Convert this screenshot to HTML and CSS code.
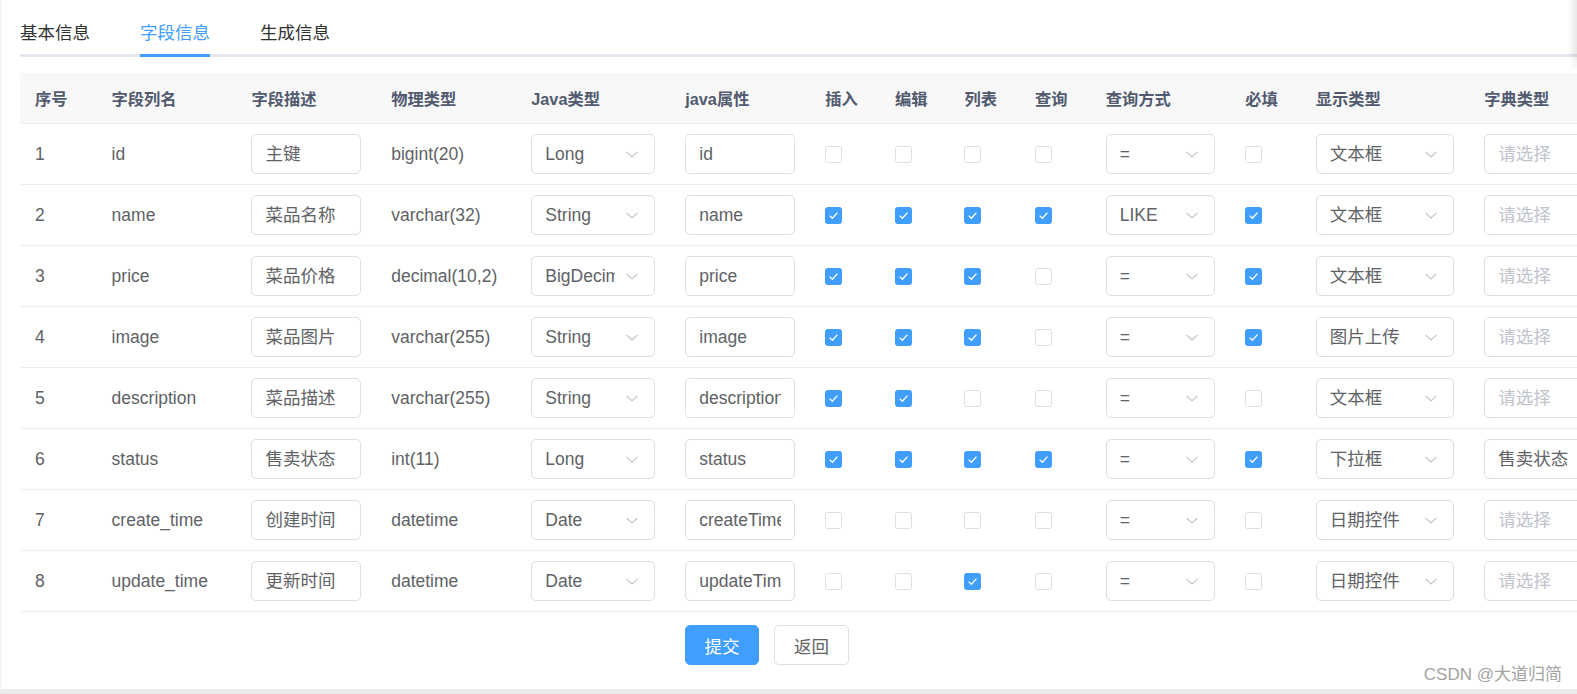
FILE: index.html
```html
<!DOCTYPE html>
<html lang="zh-CN">
<head>
<meta charset="utf-8">
<title>字段信息</title>
<link rel="stylesheet" href="styles.css">
</head>
<body>
<div class="page">
  <div class="edge-shadow"></div>
  <div class="tabs">
    <div class="tab">基本信息</div>
    <div class="tab active">字段信息</div>
    <div class="tab">生成信息</div>
  </div>

  <div class="table">
    <div class="row head">
      <div class="cell">序号</div><div class="cell">字段列名</div><div class="cell">字段描述</div><div class="cell">物理类型</div><div class="cell">Java类型</div><div class="cell">java属性</div><div class="cell">插入</div><div class="cell">编辑</div><div class="cell">列表</div><div class="cell">查询</div><div class="cell">查询方式</div><div class="cell">必填</div><div class="cell">显示类型</div><div class="cell">字典类型</div>
    </div>

    <!-- row 1 -->
    <div class="row body">
      <div class="cell">1</div><div class="cell">id</div>
      <div class="cell"><div class="ctl"><span class="v">主键</span></div></div>
      <div class="cell">bigint(20)</div>
      <div class="cell"><div class="ctl sel"><span class="v">Long</span><svg class="arr" viewBox="0 0 12 7"><path d="M0.5 0.8L6 6L11.5 0.8"/></svg></div></div>
      <div class="cell"><div class="ctl"><span class="v">id</span></div></div>
      <div class="cell"><span class="cb"></span></div>
      <div class="cell"><span class="cb"></span></div>
      <div class="cell"><span class="cb"></span></div>
      <div class="cell"><span class="cb"></span></div>
      <div class="cell"><div class="ctl sel"><span class="v">=</span><svg class="arr" viewBox="0 0 12 7"><path d="M0.5 0.8L6 6L11.5 0.8"/></svg></div></div>
      <div class="cell"><span class="cb"></span></div>
      <div class="cell"><div class="ctl sel"><span class="v">文本框</span><svg class="arr" viewBox="0 0 12 7"><path d="M0.5 0.8L6 6L11.5 0.8"/></svg></div></div>
      <div class="cell"><div class="ctl sel"><span class="v ph">请选择</span><svg class="arr" viewBox="0 0 12 7"><path d="M0.5 0.8L6 6L11.5 0.8"/></svg></div></div>
    </div>

    <!-- row 2 -->
    <div class="row body">
      <div class="cell">2</div><div class="cell">name</div>
      <div class="cell"><div class="ctl"><span class="v">菜品名称</span></div></div>
      <div class="cell">varchar(32)</div>
      <div class="cell"><div class="ctl sel"><span class="v">String</span><svg class="arr" viewBox="0 0 12 7"><path d="M0.5 0.8L6 6L11.5 0.8"/></svg></div></div>
      <div class="cell"><div class="ctl"><span class="v">name</span></div></div>
      <div class="cell"><span class="cb on"><svg viewBox="0 0 17 17"><path d="M4.6 8.6L7.4 11.3L12.4 5.6"/></svg></span></div>
      <div class="cell"><span class="cb on"><svg viewBox="0 0 17 17"><path d="M4.6 8.6L7.4 11.3L12.4 5.6"/></svg></span></div>
      <div class="cell"><span class="cb on"><svg viewBox="0 0 17 17"><path d="M4.6 8.6L7.4 11.3L12.4 5.6"/></svg></span></div>
      <div class="cell"><span class="cb on"><svg viewBox="0 0 17 17"><path d="M4.6 8.6L7.4 11.3L12.4 5.6"/></svg></span></div>
      <div class="cell"><div class="ctl sel"><span class="v">LIKE</span><svg class="arr" viewBox="0 0 12 7"><path d="M0.5 0.8L6 6L11.5 0.8"/></svg></div></div>
      <div class="cell"><span class="cb on"><svg viewBox="0 0 17 17"><path d="M4.6 8.6L7.4 11.3L12.4 5.6"/></svg></span></div>
      <div class="cell"><div class="ctl sel"><span class="v">文本框</span><svg class="arr" viewBox="0 0 12 7"><path d="M0.5 0.8L6 6L11.5 0.8"/></svg></div></div>
      <div class="cell"><div class="ctl sel"><span class="v ph">请选择</span><svg class="arr" viewBox="0 0 12 7"><path d="M0.5 0.8L6 6L11.5 0.8"/></svg></div></div>
    </div>

    <!-- row 3 -->
    <div class="row body">
      <div class="cell">3</div><div class="cell">price</div>
      <div class="cell"><div class="ctl"><span class="v">菜品价格</span></div></div>
      <div class="cell">decimal(10,2)</div>
      <div class="cell"><div class="ctl sel"><span class="v">BigDecimal</span><svg class="arr" viewBox="0 0 12 7"><path d="M0.5 0.8L6 6L11.5 0.8"/></svg></div></div>
      <div class="cell"><div class="ctl"><span class="v">price</span></div></div>
      <div class="cell"><span class="cb on"><svg viewBox="0 0 17 17"><path d="M4.6 8.6L7.4 11.3L12.4 5.6"/></svg></span></div>
      <div class="cell"><span class="cb on"><svg viewBox="0 0 17 17"><path d="M4.6 8.6L7.4 11.3L12.4 5.6"/></svg></span></div>
      <div class="cell"><span class="cb on"><svg viewBox="0 0 17 17"><path d="M4.6 8.6L7.4 11.3L12.4 5.6"/></svg></span></div>
      <div class="cell"><span class="cb"></span></div>
      <div class="cell"><div class="ctl sel"><span class="v">=</span><svg class="arr" viewBox="0 0 12 7"><path d="M0.5 0.8L6 6L11.5 0.8"/></svg></div></div>
      <div class="cell"><span class="cb on"><svg viewBox="0 0 17 17"><path d="M4.6 8.6L7.4 11.3L12.4 5.6"/></svg></span></div>
      <div class="cell"><div class="ctl sel"><span class="v">文本框</span><svg class="arr" viewBox="0 0 12 7"><path d="M0.5 0.8L6 6L11.5 0.8"/></svg></div></div>
      <div class="cell"><div class="ctl sel"><span class="v ph">请选择</span><svg class="arr" viewBox="0 0 12 7"><path d="M0.5 0.8L6 6L11.5 0.8"/></svg></div></div>
    </div>

    <!-- row 4 -->
    <div class="row body">
      <div class="cell">4</div><div class="cell">image</div>
      <div class="cell"><div class="ctl"><span class="v">菜品图片</span></div></div>
      <div class="cell">varchar(255)</div>
      <div class="cell"><div class="ctl sel"><span class="v">String</span><svg class="arr" viewBox="0 0 12 7"><path d="M0.5 0.8L6 6L11.5 0.8"/></svg></div></div>
      <div class="cell"><div class="ctl"><span class="v">image</span></div></div>
      <div class="cell"><span class="cb on"><svg viewBox="0 0 17 17"><path d="M4.6 8.6L7.4 11.3L12.4 5.6"/></svg></span></div>
      <div class="cell"><span class="cb on"><svg viewBox="0 0 17 17"><path d="M4.6 8.6L7.4 11.3L12.4 5.6"/></svg></span></div>
      <div class="cell"><span class="cb on"><svg viewBox="0 0 17 17"><path d="M4.6 8.6L7.4 11.3L12.4 5.6"/></svg></span></div>
      <div class="cell"><span class="cb"></span></div>
      <div class="cell"><div class="ctl sel"><span class="v">=</span><svg class="arr" viewBox="0 0 12 7"><path d="M0.5 0.8L6 6L11.5 0.8"/></svg></div></div>
      <div class="cell"><span class="cb on"><svg viewBox="0 0 17 17"><path d="M4.6 8.6L7.4 11.3L12.4 5.6"/></svg></span></div>
      <div class="cell"><div class="ctl sel"><span class="v">图片上传</span><svg class="arr" viewBox="0 0 12 7"><path d="M0.5 0.8L6 6L11.5 0.8"/></svg></div></div>
      <div class="cell"><div class="ctl sel"><span class="v ph">请选择</span><svg class="arr" viewBox="0 0 12 7"><path d="M0.5 0.8L6 6L11.5 0.8"/></svg></div></div>
    </div>

    <!-- row 5 -->
    <div class="row body">
      <div class="cell">5</div><div class="cell">description</div>
      <div class="cell"><div class="ctl"><span class="v">菜品描述</span></div></div>
      <div class="cell">varchar(255)</div>
      <div class="cell"><div class="ctl sel"><span class="v">String</span><svg class="arr" viewBox="0 0 12 7"><path d="M0.5 0.8L6 6L11.5 0.8"/></svg></div></div>
      <div class="cell"><div class="ctl"><span class="v">description</span></div></div>
      <div class="cell"><span class="cb on"><svg viewBox="0 0 17 17"><path d="M4.6 8.6L7.4 11.3L12.4 5.6"/></svg></span></div>
      <div class="cell"><span class="cb on"><svg viewBox="0 0 17 17"><path d="M4.6 8.6L7.4 11.3L12.4 5.6"/></svg></span></div>
      <div class="cell"><span class="cb"></span></div>
      <div class="cell"><span class="cb"></span></div>
      <div class="cell"><div class="ctl sel"><span class="v">=</span><svg class="arr" viewBox="0 0 12 7"><path d="M0.5 0.8L6 6L11.5 0.8"/></svg></div></div>
      <div class="cell"><span class="cb"></span></div>
      <div class="cell"><div class="ctl sel"><span class="v">文本框</span><svg class="arr" viewBox="0 0 12 7"><path d="M0.5 0.8L6 6L11.5 0.8"/></svg></div></div>
      <div class="cell"><div class="ctl sel"><span class="v ph">请选择</span><svg class="arr" viewBox="0 0 12 7"><path d="M0.5 0.8L6 6L11.5 0.8"/></svg></div></div>
    </div>

    <!-- row 6 -->
    <div class="row body">
      <div class="cell">6</div><div class="cell">status</div>
      <div class="cell"><div class="ctl"><span class="v">售卖状态</span></div></div>
      <div class="cell">int(11)</div>
      <div class="cell"><div class="ctl sel"><span class="v">Long</span><svg class="arr" viewBox="0 0 12 7"><path d="M0.5 0.8L6 6L11.5 0.8"/></svg></div></div>
      <div class="cell"><div class="ctl"><span class="v">status</span></div></div>
      <div class="cell"><span class="cb on"><svg viewBox="0 0 17 17"><path d="M4.6 8.6L7.4 11.3L12.4 5.6"/></svg></span></div>
      <div class="cell"><span class="cb on"><svg viewBox="0 0 17 17"><path d="M4.6 8.6L7.4 11.3L12.4 5.6"/></svg></span></div>
      <div class="cell"><span class="cb on"><svg viewBox="0 0 17 17"><path d="M4.6 8.6L7.4 11.3L12.4 5.6"/></svg></span></div>
      <div class="cell"><span class="cb on"><svg viewBox="0 0 17 17"><path d="M4.6 8.6L7.4 11.3L12.4 5.6"/></svg></span></div>
      <div class="cell"><div class="ctl sel"><span class="v">=</span><svg class="arr" viewBox="0 0 12 7"><path d="M0.5 0.8L6 6L11.5 0.8"/></svg></div></div>
      <div class="cell"><span class="cb on"><svg viewBox="0 0 17 17"><path d="M4.6 8.6L7.4 11.3L12.4 5.6"/></svg></span></div>
      <div class="cell"><div class="ctl sel"><span class="v">下拉框</span><svg class="arr" viewBox="0 0 12 7"><path d="M0.5 0.8L6 6L11.5 0.8"/></svg></div></div>
      <div class="cell"><div class="ctl sel"><span class="v">售卖状态</span><svg class="arr" viewBox="0 0 12 7"><path d="M0.5 0.8L6 6L11.5 0.8"/></svg></div></div>
    </div>

    <!-- row 7 -->
    <div class="row body">
      <div class="cell">7</div><div class="cell">create_time</div>
      <div class="cell"><div class="ctl"><span class="v">创建时间</span></div></div>
      <div class="cell">datetime</div>
      <div class="cell"><div class="ctl sel"><span class="v">Date</span><svg class="arr" viewBox="0 0 12 7"><path d="M0.5 0.8L6 6L11.5 0.8"/></svg></div></div>
      <div class="cell"><div class="ctl"><span class="v">createTime</span></div></div>
      <div class="cell"><span class="cb"></span></div>
      <div class="cell"><span class="cb"></span></div>
      <div class="cell"><span class="cb"></span></div>
      <div class="cell"><span class="cb"></span></div>
      <div class="cell"><div class="ctl sel"><span class="v">=</span><svg class="arr" viewBox="0 0 12 7"><path d="M0.5 0.8L6 6L11.5 0.8"/></svg></div></div>
      <div class="cell"><span class="cb"></span></div>
      <div class="cell"><div class="ctl sel"><span class="v">日期控件</span><svg class="arr" viewBox="0 0 12 7"><path d="M0.5 0.8L6 6L11.5 0.8"/></svg></div></div>
      <div class="cell"><div class="ctl sel"><span class="v ph">请选择</span><svg class="arr" viewBox="0 0 12 7"><path d="M0.5 0.8L6 6L11.5 0.8"/></svg></div></div>
    </div>

    <!-- row 8 -->
    <div class="row body">
      <div class="cell">8</div><div class="cell">update_time</div>
      <div class="cell"><div class="ctl"><span class="v">更新时间</span></div></div>
      <div class="cell">datetime</div>
      <div class="cell"><div class="ctl sel"><span class="v">Date</span><svg class="arr" viewBox="0 0 12 7"><path d="M0.5 0.8L6 6L11.5 0.8"/></svg></div></div>
      <div class="cell"><div class="ctl"><span class="v">updateTime</span></div></div>
      <div class="cell"><span class="cb"></span></div>
      <div class="cell"><span class="cb"></span></div>
      <div class="cell"><span class="cb on"><svg viewBox="0 0 17 17"><path d="M4.6 8.6L7.4 11.3L12.4 5.6"/></svg></span></div>
      <div class="cell"><span class="cb"></span></div>
      <div class="cell"><div class="ctl sel"><span class="v">=</span><svg class="arr" viewBox="0 0 12 7"><path d="M0.5 0.8L6 6L11.5 0.8"/></svg></div></div>
      <div class="cell"><span class="cb"></span></div>
      <div class="cell"><div class="ctl sel"><span class="v">日期控件</span><svg class="arr" viewBox="0 0 12 7"><path d="M0.5 0.8L6 6L11.5 0.8"/></svg></div></div>
      <div class="cell"><div class="ctl sel"><span class="v ph">请选择</span><svg class="arr" viewBox="0 0 12 7"><path d="M0.5 0.8L6 6L11.5 0.8"/></svg></div></div>
    </div>
  </div>

  <div class="actions">
    <div class="btn primary">提交</div>
    <div class="btn plain">返回</div>
  </div>

  <div class="wm">CSDN @大道归简</div>
</div>
</body>
</html>
```
FILE: styles.css
```css
html, body {
  margin: 0;
  padding: 0;
}
body {
  background: #ebebee;
  font-family: "Liberation Sans", "Noto Sans CJK SC", sans-serif;
  overflow: hidden;
  width: 1577px;
  height: 694px;
}
.page {
  position: relative;
  height: 689px;
  background: #fff;
  overflow: hidden;
  box-shadow: inset 3px 0 3px -2px rgba(0, 0, 0, 0.07);
}
.edge-shadow {
  position: absolute;
  right: 0;
  top: 0;
  width: 9px;
  height: 72px;
  background: linear-gradient(to right, rgba(0,0,0,0), rgba(0,0,0,0.09));
  -webkit-mask-image: linear-gradient(to bottom, #000 75%, transparent);
  z-index: 2;
}

/* tabs */
.tabs {
  display: flex;
  margin-left: 20px;
  height: 54px;
  border-bottom: 3px solid #e4e7ed;
}
.tab {
  position: relative;
  padding: 24px 25px 0;
  line-height: 18px;
  font-size: 17.5px;
  color: #303133;
}
.tab:first-child { padding-left: 0; }
.tab.active { color: #409eff; }
.tab.active::after {
  content: "";
  position: absolute;
  left: 25px;
  right: 25px;
  bottom: -3px;
  height: 3px;
  background: #409eff;
}

/* table */
.table {
  margin: 16px 0 0 20px;
  width: max-content;
}
.row {
  display: grid;
  grid-template-columns: 76.6px 139.8px 139.8px 140.1px 154px 140px 69.7px 69.5px 70.5px 70.7px 139.6px 70.4px 168.6px 168px;
  border-bottom: 1px solid #ebeef5;
}
.row.head {
  height: 50px;
  background: #f8f8f9;
  color: #515a6e;
  font-weight: bold;
  font-size: 16.25px;
}
.row.body {
  height: 60px;
  color: #606266;
  font-size: 17.5px;
}
.cell {
  padding: 0 15px;
  display: flex;
  align-items: center;
  min-width: 0;
  white-space: nowrap;
}

/* inputs / selects */
.ctl {
  position: relative;
  width: 100%;
  height: 40px;
  box-sizing: border-box;
  border: 1px solid #dcdfe6;
  border-radius: 5px;
  padding: 0 13px 0 13px;
  line-height: 38px;
  font-size: 17.5px;
  color: #606266;
  background: #fff;
}
.ctl.sel { padding-right: 39px; }
.ctl .v {
  display: block;
  overflow: hidden;
  white-space: nowrap;
}
.ctl .v.ph { color: #c0c4cc; }
.arr {
  position: absolute;
  right: 16px;
  top: 16px;
  width: 12px;
  height: 7px;
}
.arr path {
  fill: none;
  stroke: #c0c4cc;
  stroke-width: 1.1;
}

/* checkboxes */
.cb {
  display: block;
  width: 17px;
  height: 17px;
  box-sizing: border-box;
  border: 1px solid #dcdfe6;
  border-radius: 2.5px;
  background: #fff;
}
.cb.on {
  background: #409eff;
  border-color: #409eff;
}
.cb svg {
  display: block;
  width: 17px;
  height: 17px;
  margin: -1px;
}
.cb svg path {
  fill: none;
  stroke: #fff;
  stroke-width: 1.3;
}

/* buttons */
.actions {
  display: flex;
  justify-content: center;
  gap: 15px;
  width: 1494px;
  margin: 13px 0 0 20px;
}
.btn {
  height: 40px;
  box-sizing: border-box;
  border-radius: 5px;
  font-size: 17.5px;
  display: flex;
  align-items: center;
  justify-content: center;
}
.btn.primary {
  width: 74px;
  background: #409eff;
  border: 1px solid #409eff;
  color: #fff;
}
.btn.plain {
  width: 75px;
  background: #fff;
  border: 1px solid #dcdfe6;
  color: #606266;
}

/* watermark */
.wm {
  position: absolute;
  right: 15px;
  top: 664px;
  font-size: 17px;
  color: #a3a3a3;
  line-height: 22px;
}
```
